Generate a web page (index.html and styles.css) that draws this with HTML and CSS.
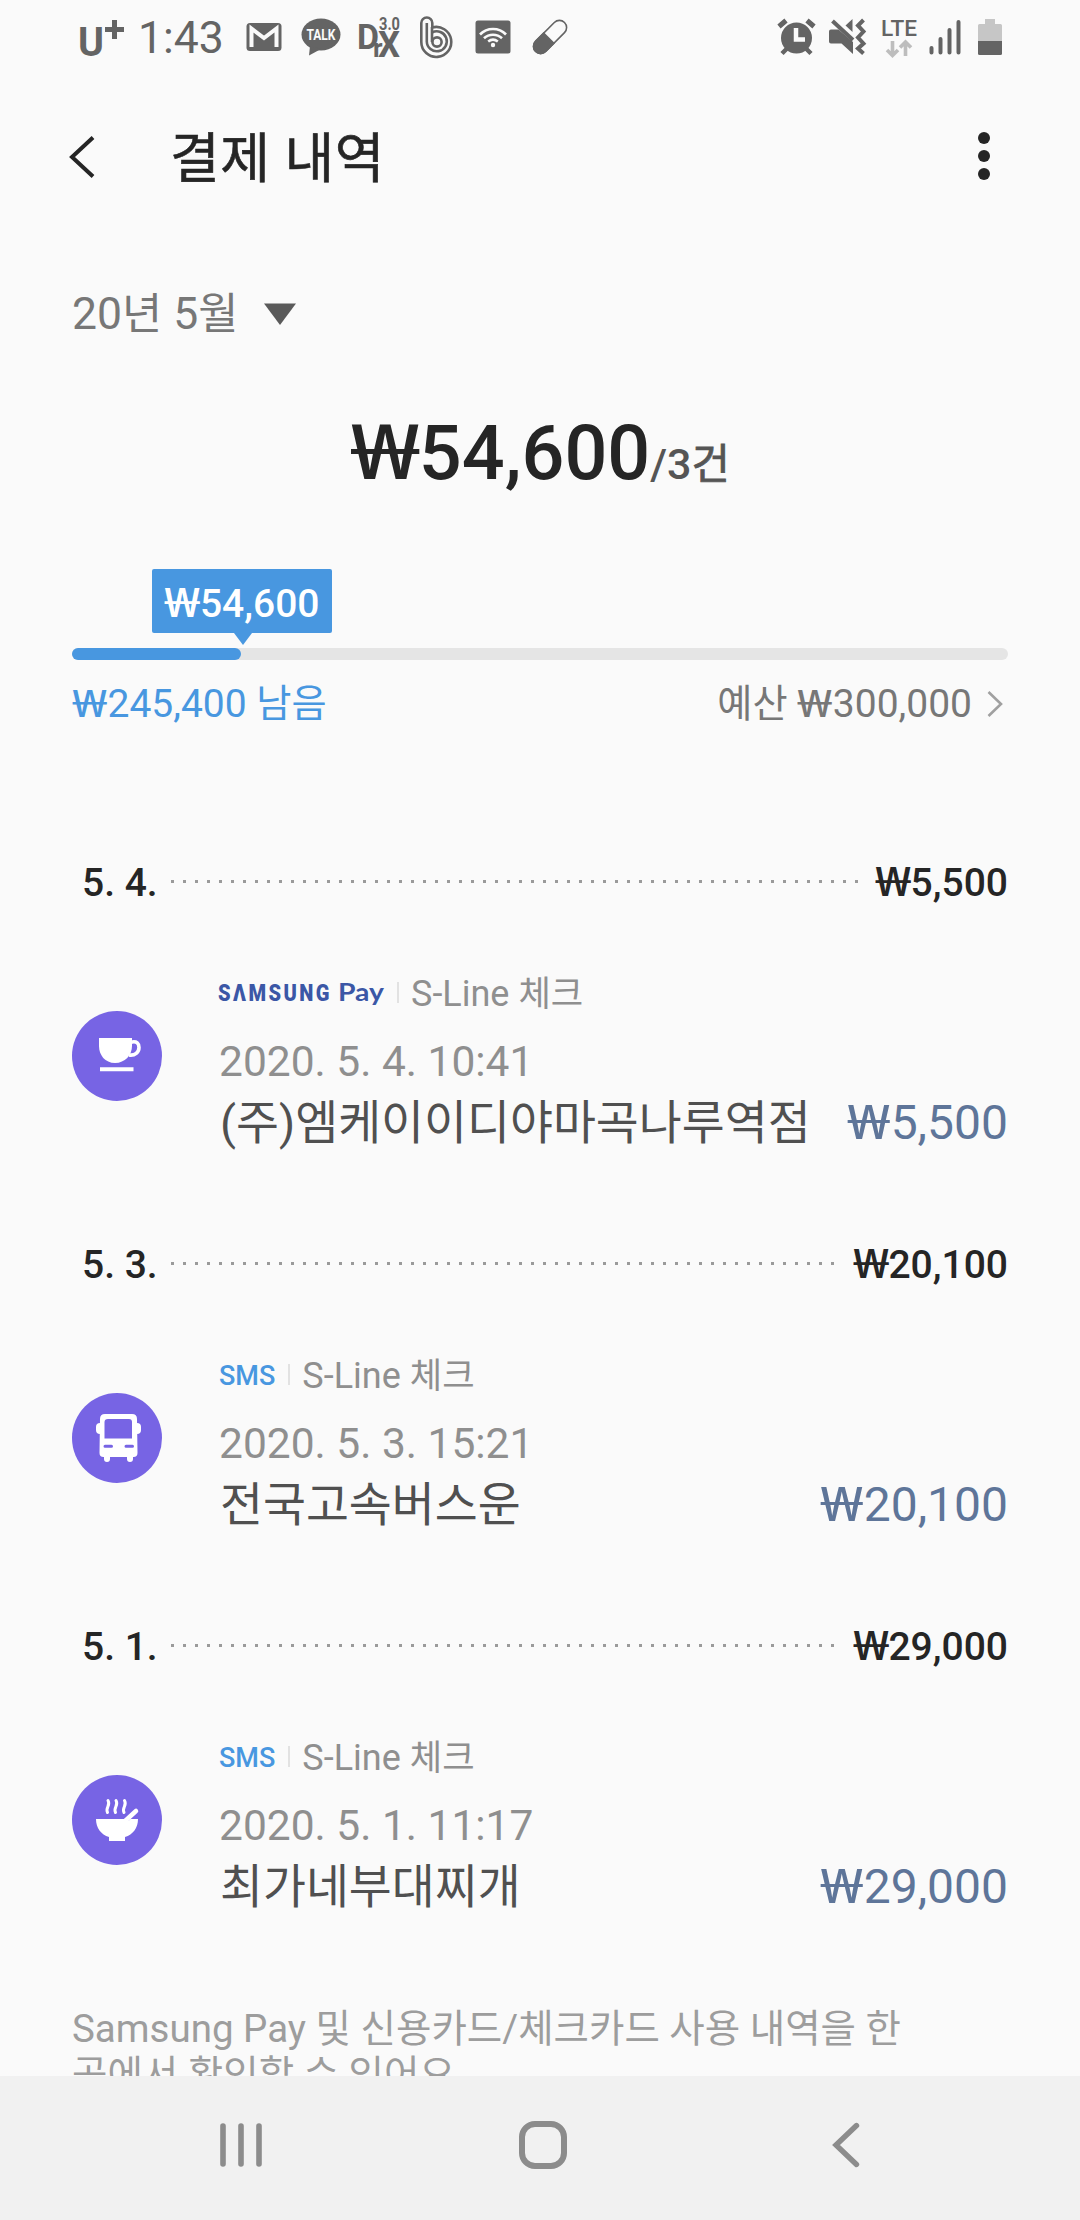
FILE: index.html
```html
<!DOCTYPE html>
<html lang="ko">
<head>
<meta charset="utf-8">
<title>결제 내역</title>
<link rel="stylesheet" href="styles.css">
</head>
<body>
<div class="screen">
  <main class="content">
    <div class="status">
      <svg class="carrier" width="50" height="44" viewBox="0 0 50 44"><text x="1" y="40" font-size="41" font-weight="700" textLength="26" lengthAdjust="spacingAndGlyphs">U</text><path d="M28 13.500h19M37.500 4v19" stroke="#646464" stroke-width="5"/></svg>
      <span class="clock">1:43</span>
      <svg class="i-mail" width="36" height="30" viewBox="0 0 36 30"><rect x="0.500" y="1" width="35" height="28" rx="3.500"/><path d="M5.500 25V6.500L18 16 30.500 6.500V25" fill="none" stroke="#fafafa" stroke-width="4"/></svg>
      <svg class="i-talk" width="40" height="38" viewBox="0 0 40 38"><ellipse cx="20" cy="16.500" rx="19.500" ry="16"/><path d="M9 28L8 37.500 20 31z"/><text x="5.500" y="22" font-size="15.500" font-weight="700" textLength="29" lengthAdjust="spacingAndGlyphs" class="inv">TALK</text></svg>
      <svg class="i-dx" width="42" height="44" viewBox="0 0 42 44"><text x="-1" y="34" font-size="35" font-weight="700" textLength="22" lengthAdjust="spacingAndGlyphs">D</text><text x="15" y="42" font-size="26" font-weight="700">r</text><text x="20" y="42" font-size="36" font-weight="700" textLength="22" lengthAdjust="spacingAndGlyphs">X</text><text x="21" y="14.500" font-size="19" font-weight="700" textLength="21" lengthAdjust="spacingAndGlyphs">3.0</text></svg>
      <svg class="i-band" width="36" height="44" viewBox="0 0 36 44" fill="none" stroke="#646464" stroke-width="2.600"><path d="M2.300 27V8a5.500 5.500 0 0 1 11 0v4.500A15 15 0 1 1 2.300 27z"/><path d="M7.800 27V8M13 17.500a10 10 0 1 1-5.200 9"/><circle cx="18" cy="27" r="4.600"/><path d="M13 12v15"/></svg>
      <svg class="i-wifi" width="36" height="34" viewBox="0 0 36 34"><rect x="0.500" y="0.500" width="35" height="33" rx="2.500"/><g fill="none" stroke="#fafafa" stroke-width="2.600"><path d="M5 14.500a18 18 0 0 1 26 0M9 18.300a13 13 0 0 1 18 0M13.200 21.500a8 8 0 0 1 9.600 0"/></g><circle cx="18" cy="25" r="2.200" fill="#fafafa"/></svg>
      <svg class="i-pill" width="38" height="36" viewBox="0 0 38 36"><g transform="rotate(-45 19 18)"><rect x="-1.500" y="10.800" width="41" height="14.400" rx="7.200" fill="none" stroke="#646464" stroke-width="1.600"/><path d="M18 10H6a8 8 0 0 0 0 16h12z"/></g></svg>
      <span class="push"></span>
      <svg class="i-alarm" width="40" height="38" viewBox="0 0 40 38"><circle cx="19.500" cy="20" r="15.500"/><path d="M2 8.500L9 2.500M37 8.500L30 2.500" stroke="#646464" stroke-width="5"/><path d="M5 35.500l5-5M34 35.500l-5-5" stroke="#646464" stroke-width="4.500"/><path d="M19 10v11.500h9" fill="none" stroke="#fafafa" stroke-width="4.500"/></svg>
      <svg class="i-mute" width="38" height="38" viewBox="0 0 38 38"><path d="M2 11.500h7.500L24 24V36L12.500 25.500H2a2 2 0 0 1-2-2v-10a2 2 0 0 1 2-2z"/><path d="M16.500 7.500L23.500 1v13z"/><path d="M3.500 3L24 22" stroke="#646464" stroke-width="4"/><path d="M34.500 2l-5.500 5.500 5.500 6-5.500 6 5.500 6-5.500 5 5.500 5" fill="none" stroke="#646464" stroke-width="4"/></svg>
      <svg class="i-lte" width="36" height="40" viewBox="0 0 36 40"><text x="0" y="17" font-size="22" font-weight="500" textLength="36" lengthAdjust="spacingAndGlyphs">LTE</text><path d="M11.500 22v14M6 31l5.500 5.500L17 31M24.500 37V23M19 28.500l5.500-5.500 5.500 5.500" fill="none" stroke="#bdbdbd" stroke-width="3.600"/></svg>
      <svg class="i-signal" width="32" height="36" viewBox="0 0 32 36"><path d="M2.500 29v4.500M11.500 20v13.500M20.500 11v22.500M29.500 3v30.500" stroke="#646464" stroke-width="4" stroke-linecap="round"/></svg>
      <svg class="i-batt" width="24" height="36" viewBox="0 0 24 36"><path d="M7 0h10v5h5.500A1.500 1.500 0 0 1 24 6.500V22H0V6.500A1.500 1.500 0 0 1 1.500 5H7z" fill="#c6c6c6"/><path d="M0 22h24v12.500a1.500 1.500 0 0 1-1.500 1.500h-21A1.500 1.500 0 0 1 0 34.500z"/></svg>
    </div>

    <header class="appbar">
      <svg class="back" width="28" height="44" viewBox="0 0 28 44"><path d="M25 2.500L4 22l21 19.500" fill="none" stroke="#252525" stroke-width="4"/></svg>
      <h1 class="title">결제 내역</h1>
      <svg class="more" width="14" height="48" viewBox="0 0 14 48" fill="#252525"><circle cx="7" cy="6" r="6"/><circle cx="7" cy="24" r="6"/><circle cx="7" cy="42" r="6"/></svg>
    </header>

    <div class="month"><span>20<span class="kr">년</span> 5<span class="kr">월</span></span><svg width="32" height="22" viewBox="0 0 32 22"><path d="M0 .5h32L16 22z" fill="#5a5a5a"/></svg></div>

    <div class="total"><span class="sum"><span class="won">₩</span>54,600</span><span class="count">/3<span class="kr">건</span></span></div>

    <section class="budget">
      <div class="bubble"><span class="won">₩</span>54,600</div>
      <div class="track"><div class="fill"></div></div>
      <div class="labels">
        <span class="left"><span class="won">₩</span>245,400 <span class="kr">남음</span></span>
        <span class="limit"><span class="kr">예산</span> <span class="won">₩</span>300,000</span>
        <svg width="16" height="28" viewBox="0 0 16 28"><path d="M1.500 2l12.500 12L1.500 26" fill="none" stroke="#a0a0a0" stroke-width="2.600"/></svg>
      </div>
    </section>

    <section class="day">
      <div class="dayhead"><span class="date">5. 4.</span><span class="dots"></span><span class="sumday"><span class="won">₩</span>5,500</span></div>
      <div class="entry">
        <svg class="badge" width="90" height="90" viewBox="0 0 90 90"><circle cx="45" cy="45" r="45" fill="#7764e4"/><path d="M27 27h33v8c0 9-7 17-17 17s-16-8-16-17z" fill="#fff"/><path d="M59 31.200c6-1.500 8 1.500 8 5.300 0 4.500-4 8.500-10 7.500" fill="none" stroke="#fff" stroke-width="3.600"/><path d="M28 58.300h33.500" stroke="#fff" stroke-width="4"/></svg>
        <div class="detail">
          <div class="meta"><svg class="spay" width="168" height="28" viewBox="0 0 168 28" fill="#3b57a6"><text transform="scale(.82 1)" x="0" y="21" font-size="24.500" font-weight="900" textLength="136" lengthAdjust="spacing">SΛMSUNG</text><text class="pay" x="120" y="21" font-size="24" textLength="46" lengthAdjust="spacingAndGlyphs">Pay</text></svg><span class="sep"></span><span>S-Line <span class="kr">체크</span></span></div>
          <div class="time">2020. 5. 4. 10:41</div>
          <div class="line"><span class="name">(주)엠케이이디야마곡나루역점</span><span class="amount"><span class="won">₩</span>5,500</span></div>
        </div>
      </div>
    </section>

    <section class="day">
      <div class="dayhead"><span class="date">5. 3.</span><span class="dots"></span><span class="sumday"><span class="won">₩</span>20,100</span></div>
      <div class="entry">
        <svg class="badge" width="90" height="90" viewBox="0 0 90 90"><circle cx="45" cy="45" r="45" fill="#7764e4"/><rect x="24" y="30" width="45" height="11" rx="4" fill="#fff"/><path d="M33 21h27q5 0 5 5l.5 34q0 4-4 4h-30q-4 0-4-4l.5-34q0-5 5-5z" fill="#fff"/><path d="M32 60h6v6a3 3 0 0 1-6 0zM55 60h6v6a3 3 0 0 1-6 0z" fill="#fff"/><path d="M36 26h21q3 0 3 3v16.500H32.500V29q0-3 3.500-3z" fill="#7764e4"/><path d="M33 53.300h6.500M54 53.300h6.500" stroke="#7764e4" stroke-width="3" stroke-linecap="round"/></svg>
        <div class="detail">
          <div class="meta"><span class="sms">SMS</span><span class="sep"></span><span>S-Line <span class="kr">체크</span></span></div>
          <div class="time">2020. 5. 3. 15:21</div>
          <div class="line"><span class="name">전국고속버스운</span><span class="amount"><span class="won">₩</span>20,100</span></div>
        </div>
      </div>
    </section>

    <section class="day">
      <div class="dayhead"><span class="date">5. 1.</span><span class="dots"></span><span class="sumday"><span class="won">₩</span>29,000</span></div>
      <div class="entry">
        <svg class="badge" width="90" height="90" viewBox="0 0 90 90"><circle cx="45" cy="45" r="45" fill="#7764e4"/><path d="M24 44h42c0 9-5 15.500-13 18v4H37v-4c-8-2.500-13-9-13-18z" fill="#fff"/><path d="M54 43.500l10-9" stroke="#7764e4" stroke-width="7"/><path d="M52 47l12-11" stroke="#fff" stroke-width="4.500" stroke-linecap="round"/><path d="M36 25.500c3 5-3 7-.500 12M44 25.500c3 5-3 7-.500 12M52.500 25.500c3 5-3 7-.500 12" fill="none" stroke="#fff" stroke-width="3" stroke-linecap="round"/></svg>
        <div class="detail">
          <div class="meta"><span class="sms">SMS</span><span class="sep"></span><span>S-Line <span class="kr">체크</span></span></div>
          <div class="time">2020. 5. 1. 11:17</div>
          <div class="line"><span class="name">최가네부대찌개</span><span class="amount"><span class="won">₩</span>29,000</span></div>
        </div>
      </div>
    </section>

    <p class="note">Samsung Pay 및 신용카드/체크카드 사용 내역을 한<br>곳에서 확인할 수 있어요.</p>
  </main>

  <nav class="nav">
    <svg width="44" height="48" viewBox="0 0 44 48"><path d="M4 5v38M22 5v38M40 5v38" stroke="#8c8c8c" stroke-width="5.600" stroke-linecap="round"/></svg>
    <svg width="48" height="48" viewBox="0 0 48 48"><rect x="3" y="3" width="42" height="42" rx="13" fill="none" stroke="#8c8c8c" stroke-width="6"/></svg>
    <svg width="28" height="48" viewBox="0 0 28 48"><path d="M24.500 4.500L4 24l20.500 19.500" fill="none" stroke="#8c8c8c" stroke-width="5.400" stroke-linecap="round"/></svg>
  </nav>
</div>
</body>
</html>
```
FILE: styles.css
```css
body {
  margin: 0;
  background: #fafafa;
  font-family: Roboto, "Noto Sans CJK KR", sans-serif;
}

.screen {
  width: 1080px;
  height: 2220px;
  display: flex;
  flex-direction: column;
  overflow: hidden;
}

.content {
  height: 2076px;
  box-sizing: border-box;
  padding: 0 72px;
  overflow: hidden;
}

svg { display: block; flex: none; overflow: visible; }
span { white-space: pre; }
.kr { font-size: 0.98em; }

/* Wide single-bar won sign */
.won {
  display: inline-block;
  width: 0.91em;
  font-family: "Noto Sans", sans-serif;
  line-height: 1;
  text-align: left;
  transform: scaleX(1.35);
  transform-origin: left;
}

/* Status bar */
.status {
  height: 76px;
  display: flex;
  align-items: flex-start;
  color: #646464;
  fill: #646464;
  margin-right: -72px;
}
.carrier { margin: 16px 0 0 5px; }
.clock { font-size: 44.5px; line-height: 76px; margin-left: 11px; width: 108px; }
.i-mail { margin-top: 22px; }
.i-talk { margin: 18px 0 0 19px; }
.inv { fill: #fafafa; }
.i-dx { margin: 15px 0 0 17px; }
.i-band { margin: 15px 0 0 19px; }
.i-wifi { margin: 20px 0 0 20px; }
.i-pill { margin: 19px 0 0 20px; }
.push { flex: 1; }
.i-alarm { margin: 18px 12px 0 0; }
.i-mute { margin: 18px 14px 0 0; }
.i-lte { margin: 19px 12px 0 0; }
.i-signal { margin: 19px 17px 0 0; }
.i-batt { margin: 19px 78px 0 0; }

/* App bar */
.appbar {
  height: 162px;
  display: flex;
  align-items: center;
  color: #252525;
}
.back { margin-left: -4px; }
.title {
  flex: 1;
  margin: 6px 0 0 74px;
  font-size: 54px;
  font-weight: 400;
  letter-spacing: 0.6px;
  -webkit-text-stroke: 0.6px #252525;
  line-height: 80px;
}
.more { margin: 0 17px 2px 0; }

.month {
  margin-top: 46px;
  height: 60px;
  line-height: 60px;
  display: flex;
  align-items: center;
  gap: 26px;
  font-size: 44.5px;
  color: #777;
}

.total {
  margin-top: 64px;
  height: 90px;
  line-height: 90px;
  display: flex;
  justify-content: center;
  align-items: baseline;
  font-weight: 500;
  color: #252525;
}
.sum { font-size: 75.5px; }
.count { font-size: 43px; color: #555; }
.count .kr {
  font-size: 0.97em;
  font-weight: 400;
  -webkit-text-stroke: 0.8px #555;
}

/* Budget progress */
.budget { padding-top: 71px; }
.bubble {
  position: relative;
  width: 180px;
  height: 64px;
  margin-left: 80px;
  border-radius: 2px;
  background: #4897e0;
  color: #fff;
  text-align: center;
  font-size: 39px;
  font-weight: 500;
  line-height: 70px;
}
.bubble::after {
  content: "";
  position: absolute;
  left: 82px;
  top: 100%;
  border: solid transparent;
  border-width: 12px 9px 0;
  border-top-color: #4897e0;
}
.track {
  margin-top: 15px;
  height: 12px;
  border-radius: 6px;
  background: #e5e5e5;
}
.fill {
  width: 169px;
  height: 12px;
  border-radius: 6px;
  background: #4897e0;
}
.labels {
  margin: 19px 0 124px;
  height: 50px;
  line-height: 50px;
  display: flex;
  align-items: center;
  font-size: 39px;
  color: #777;
  padding-right: 5px;
}
.left { flex: 1; color: #4897e0; }
.limit { margin-right: 15px; }

/* Daily groups */
.day { height: 382px; }
.dayhead {
  height: 60px;
  line-height: 60px;
  display: flex;
  align-items: center;
  padding-left: 10px;
  font-size: 39px;
  font-weight: 500;
  color: #252525;
}
.date { width: 89px; }
.dots {
  flex: 1;
  height: 3px;
  margin: 0 14px 3px 0;
  background: repeating-linear-gradient(90deg, #9a9a9a 0 3px, transparent 3px 12px);
}
.entry { display: flex; margin-top: 59px; }
.badge { margin: 39px 57px 0 0; }
.detail { flex: 1; }
.meta {
  height: 44px;
  line-height: 44px;
  display: flex;
  align-items: center;
  font-size: 36px;
  color: #8f8f8f;
}
.spay { margin-left: -1px; }
.pay { font-family: Lato, sans-serif; font-weight: 700; }
.sep {
  width: 2px;
  height: 21px;
  margin: 0 12px 4px 11px;
  background: #e2e2e2;
}
.sms {
  margin-right: 2px;
  font-size: 27px;
  font-weight: 500;
  color: #4897e0;
}
.time {
  margin-top: 16px;
  height: 60px;
  line-height: 60px;
  font-size: 42.5px;
  color: #8f8f8f;
}
.line {
  margin-top: 1px;
  height: 60px;
  line-height: 60px;
  display: flex;
  justify-content: space-between;
}
.name { padding-left: 1px; font-size: 46.7px; color: #505050; }
.amount { font-size: 48px; color: #5e7599; }

.note {
  margin: 7px 0 0;
  font-size: 38.5px;
  line-height: 46px;
  color: #9d9d9d;
  white-space: nowrap;
}

/* Navigation bar */
.nav {
  height: 144px;
  display: flex;
  align-items: center;
  background: #f1f1f1;
  padding: 0 0 6px 219px;
  box-sizing: border-box;
  gap: 256px;
}
.nav svg:last-child { margin-left: 9px; }
```
